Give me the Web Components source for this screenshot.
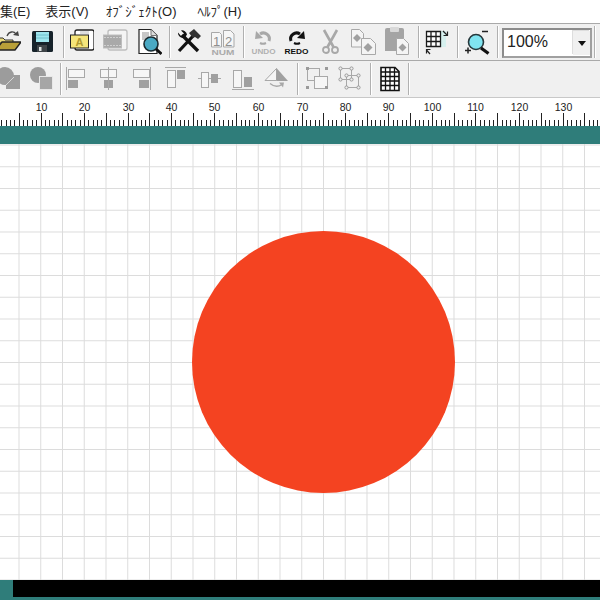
<!DOCTYPE html>
<html lang="ja">
<head>
<meta charset="utf-8">
<title>draw</title>
<style>
  html, body { margin: 0; padding: 0; background: #fff; overflow: hidden; }
  svg text { font-family: "Liberation Sans", sans-serif; }
</style>
</head>
<body>
<app-window>
  <menu-bar>
    <menu-item style="margin-left:0">集(E)</menu-item>
    <menu-item style="margin-left:15px">表示(V)</menu-item>
    <menu-item style="margin-left:17px">ｵﾌﾞｼﾞｪｸﾄ(O)</menu-item>
    <menu-item style="margin-left:21px">ﾍﾙﾌﾟ(H)</menu-item>
  </menu-bar>

  <tool-bar>
    <!-- open -->
    <tool-btn><svg width="21" height="36" viewBox="0 0 21 36">
      <path d="M-3 14h6l2 2h8v3H-3z" fill="#eadb7c" stroke="#333" stroke-width="1"/>
      <path d="M-4 26L2 18H21L15 26Z" fill="#b9a038" stroke="#222" stroke-width="1.400"/>
      <path d="M7 12C9 7 14 7 16 10" fill="none" stroke="#444" stroke-width="1.300"/>
      <path d="M13 11l6 1-1-5z" fill="#444"/>
    </svg></tool-btn>
    <!-- save -->
    <tool-btn style="margin-left:11px"><svg width="21" height="36" viewBox="0 0 21 36">
      <rect x="0" y="7" width="21" height="21" rx="1.500" fill="#16222a"/>
      <rect x="4" y="8" width="13" height="10" fill="#9fe5ee"/>
      <path d="M4 11h13M4 14h13" stroke="#6fc0cc" stroke-width="1"/>
      <rect x="5" y="21" width="10" height="7" fill="#3e4448"/>
      <rect x="7" y="23" width="2.500" height="4" fill="#dfe3e3"/>
    </svg></tool-btn>
    <tool-sep style="margin-left:10px"></tool-sep>
    <!-- frame with colour -->
    <tool-btn style="margin-left:6px"><svg width="24" height="36" viewBox="0 0 24 36">
      <path d="M5 11V8q0-2 2-2h15q2 0 2 2v16q0 2-2 2H7q-2 0-2-2v-1" fill="#fff" stroke="#222" stroke-width="1.300"/>
      <rect x="10" y="7" width="9" height="3" fill="#ddd"/>
      <rect x=".5" y="11" width="18" height="13" fill="#f5e57a" stroke="#222" stroke-width="1"/>
      <text x="9.500" y="22" font-size="11" font-weight="700" text-anchor="middle" fill="#b09a30">A</text>
    </svg></tool-btn>
    <!-- frame grey -->
    <tool-btn style="margin-left:9px"><svg width="25" height="36" viewBox="0 0 25 36">
      <path d="M5 11V8q0-2 2-2h15q2 0 2 2v16q0 2-2 2H7q-2 0-2-2v-1" fill="#f4f4f4" stroke="#bdbdbd" stroke-width="1.300"/>
      <rect x=".5" y="11" width="18" height="13" fill="#a9a9a9" stroke="#bdbdbd" stroke-width="1"/>
      <path d="M1 13.500h17M1 21.500h17" stroke="#cfcfcf" stroke-width="1" stroke-dasharray="2 1"/>
    </svg></tool-btn>
    <!-- page preview -->
    <tool-btn style="margin-left:10px"><svg width="24" height="36" viewBox="0 0 24 36">
      <path d="M1 5.500h12l6 6V29.500H1z" fill="#fff" stroke="#222" stroke-width="1.200"/>
      <path d="M13 5.500v6h6" fill="#ddd" stroke="#777"/>
      <path d="M4 8h7v8H4z" fill="#c8c8c8"/>
      <circle cx="13" cy="20" r="7" fill="#4aa9c4" stroke="#1a2a30" stroke-width="1.600"/>
      <path d="M18 25l5.500 5" stroke="#111" stroke-width="3"/>
    </svg></tool-btn>
    <tool-sep style="margin-left:7px"></tool-sep>
    <!-- tools -->
    <tool-btn style="margin-left:7px"><svg width="24" height="36" viewBox="0 0 24 36">
      <path d="M5 11L21 27" stroke="#111" stroke-width="3.400"/>
      <path d="M1 8.500a5 5 0 0 0 7 5l2-3a5 5 0 0 0-6-4l3 3-3 2.500z" fill="#111"/>
      <path d="M2 27L17 11" stroke="#111" stroke-width="3.200"/>
      <path d="M12 9l5-4 7 7-3 3-3-2-2 1z" fill="#333"/>
    </svg></tool-btn>
    <!-- number -->
    <tool-btn style="margin-left:10px"><svg width="24" height="36" viewBox="0 0 24 36">
      <path d="M.5 8.500h8l2 2V23H.5zM12.500 6.500h7l3.500 3.500V23H12.500z" fill="#f6f6f6" stroke="#a8a8a8"/>
      <text x="5.500" y="21.500" font-size="13" text-anchor="middle" fill="#8f8f8f">1</text>
      <text x="17.500" y="21.500" font-size="13" text-anchor="middle" fill="#8f8f8f">2</text>
      <text x="12" y="30.500" font-size="7.500" text-anchor="middle" fill="#aaa" font-weight="700" textLength="23" lengthAdjust="spacingAndGlyphs">NUM</text>
    </svg></tool-btn>
    <tool-sep style="margin-left:8px"></tool-sep>
    <!-- undo -->
    <tool-btn style="margin-left:7px"><svg width="25" height="36" viewBox="0 0 25 36">
      <path d="M18 17a6 6 0 0 0-9-7" fill="none" stroke="#a8a8a8" stroke-width="3"/>
      <path d="M12 14l-8 1 1-8z" fill="#a8a8a8"/>
      <path d="M9 19q3 1.500 6 0" fill="none" stroke="#a8a8a8" stroke-width="2"/>
      <text x="12.500" y="29.500" font-size="8" text-anchor="middle" fill="#b0b0b0" font-weight="700" textLength="24" lengthAdjust="spacingAndGlyphs">UNDO</text>
    </svg></tool-btn>
    <!-- redo -->
    <tool-btn style="margin-left:8px"><svg width="25" height="36" viewBox="0 0 25 36">
      <path d="M7 17a6 6 0 0 1 9-7" fill="none" stroke="#111" stroke-width="3"/>
      <path d="M13 14l8 1-1-8z" fill="#111"/>
      <path d="M10 19q3 1.500 6 0" fill="none" stroke="#111" stroke-width="2"/>
      <text x="12.500" y="29.500" font-size="8" text-anchor="middle" fill="#111" font-weight="700" textLength="24" lengthAdjust="spacingAndGlyphs">REDO</text>
    </svg></tool-btn>
    <!-- scissors -->
    <tool-btn style="margin-left:13px"><svg width="17" height="36" viewBox="0 0 17 36">
      <path d="M2 6l9.500 17M15 6L5.500 23" stroke="#a8a8a8" stroke-width="2.600"/>
      <circle cx="4" cy="26" r="3" fill="none" stroke="#a8a8a8" stroke-width="1.800"/>
      <circle cx="13" cy="26" r="3" fill="none" stroke="#a8a8a8" stroke-width="1.800"/>
    </svg></tool-btn>
    <!-- copy -->
    <tool-btn style="margin-left:12px"><svg width="25" height="36" viewBox="0 0 25 36">
      <path d="M.5 5.500h8l4 4V23H.5z" fill="#f4f4f4" stroke="#a8a8a8"/>
      <path d="M6 10l4 4-4 4-4-4z" fill="#a0a0a0"/>
      <path d="M10.500 14.500h9l5 5V30.500H10.500z" fill="#f4f4f4" stroke="#a8a8a8"/>
      <path d="M17 19l4.500 4.500L17 28l-4.500-4.500z" fill="#a0a0a0"/>
    </svg></tool-btn>
    <!-- paste -->
    <tool-btn style="margin-left:9px"><svg width="24" height="36" viewBox="0 0 24 36">
      <path d="M0 6q0-2 2-2h15q2 0 2 2v21H0z" fill="#a4a4a4"/>
      <rect x="5" y="3" width="9" height="5" rx="1" fill="#d8d8d8"/>
      <path d="M11.500 14.500h7l5 5V30.500H11.500z" fill="#f4f4f4" stroke="#a8a8a8"/>
      <path d="M17.500 19.500l4 4-4 4-4-4z" fill="#a0a0a0"/>
    </svg></tool-btn>
    <tool-sep style="margin-left:9px"></tool-sep>
    <!-- grid setup -->
    <tool-btn style="margin-left:6px"><svg width="24" height="36" viewBox="0 0 24 36">
      <rect x="15" y="7" width="6" height="16" fill="#d6f0ee"/>
      <path d="M1.500 7.500h14v15h-14zM1.500 12.500h14M1.500 17.500h14M6 7.500v15M11 7.500v15" fill="#fff" stroke="#1a1a1a" stroke-width="1.300"/>
      <path d="M18 7l4 4M22.500 7.500v4h-4" fill="none" stroke="#222" stroke-width="1.200"/>
      <path d="M5 30l-3.500-4M1.500 29.500v-4h4" fill="none" stroke="#222" stroke-width="1.200"/>
    </svg></tool-btn>
    <tool-sep style="margin-left:8px"></tool-sep>
    <!-- zoom -->
    <tool-btn style="margin-left:7px"><svg width="25" height="36" viewBox="0 0 25 36">
      <circle cx="11" cy="18" r="7.500" fill="#80e4f0" stroke="#26383c" stroke-width="1.600"/>
      <path d="M16 24l7.500 5.500" stroke="#111" stroke-width="3.200"/>
      <path d="M0 26.500h6M3 23.500v6M17 7.500h6" stroke="#222" stroke-width="1.500"/>
    </svg></tool-btn>
    <tool-sep style="margin-left:7px"></tool-sep>
    <zoom-combo style="margin-left:4px">100%</zoom-combo>
    <tool-sep style="margin-left:2px"></tool-sep>
  </tool-bar>

  <tool-bar>
    <!-- union -->
    <tool-btn><svg width="20" height="36" viewBox="0 0 20 36">
      <circle cx="5" cy="15" r="9" fill="#9c9c9c"/>
      <rect x="6" y="14" width="14" height="14" fill="#9c9c9c"/>
      <path d="M6 24l8-8" stroke="#d8d8d8" stroke-width="1"/>
    </svg></tool-btn>
    <!-- subtract -->
    <tool-btn style="margin-left:10px"><svg width="23" height="36" viewBox="0 0 23 36">
      <circle cx="8" cy="14" r="8" fill="#9c9c9c"/>
      <rect x="9.500" y="15.500" width="13" height="13" fill="#a6a6a6" stroke="#e8e8e8"/>
    </svg></tool-btn>
    <tool-sep style="margin-left:7px"></tool-sep>
    <!-- align left -->
    <tool-btn style="margin-left:5px"><svg width="20" height="36" viewBox="0 0 20 36">
      <path d="M.5 6v23" stroke="#a8a8a8"/>
      <rect x="2.500" y="8.500" width="16" height="8" fill="#f6f6f6" stroke="#a8a8a8"/>
      <rect x="2" y="19" width="10" height="8" fill="#a0a0a0"/>
    </svg></tool-btn>
    <!-- align centre -->
    <tool-btn style="margin-left:13px"><svg width="19" height="36" viewBox="0 0 19 36">
      <rect x="1.500" y="8.500" width="16" height="8" fill="#f6f6f6" stroke="#a8a8a8"/>
      <rect x="5" y="19" width="9" height="8" fill="#a0a0a0"/>
      <path d="M9.500 6v23" stroke="#a8a8a8"/>
    </svg></tool-btn>
    <!-- align right -->
    <tool-btn style="margin-left:14px"><svg width="19" height="36" viewBox="0 0 19 36">
      <path d="M18.500 6v23" stroke="#a8a8a8"/>
      <rect x="1.500" y="8.500" width="16" height="8" fill="#f6f6f6" stroke="#a8a8a8"/>
      <rect x="7" y="19" width="10" height="8" fill="#a0a0a0"/>
    </svg></tool-btn>
    <!-- align top -->
    <tool-btn style="margin-left:14px"><svg width="21" height="36" viewBox="0 0 21 36">
      <path d="M0 6.500h21" stroke="#a8a8a8"/>
      <rect x="2.500" y="9.500" width="8" height="17" fill="#f6f6f6" stroke="#a8a8a8"/>
      <rect x="12" y="9" width="8" height="9" fill="#a0a0a0"/>
    </svg></tool-btn>
    <!-- align middle -->
    <tool-btn style="margin-left:12px"><svg width="23" height="36" viewBox="0 0 23 36">
      <path d="M0 17.500h23" stroke="#a8a8a8"/>
      <rect x="3.500" y="11.500" width="7" height="15" fill="#f6f6f6" stroke="#a8a8a8"/>
      <rect x="13" y="13" width="7" height="9" fill="#a0a0a0"/>
    </svg></tool-btn>
    <!-- align bottom -->
    <tool-btn style="margin-left:11px"><svg width="22" height="36" viewBox="0 0 22 36">
      <path d="M0 28.500h22" stroke="#a8a8a8"/>
      <rect x="1.500" y="9.500" width="8" height="17" fill="#f6f6f6" stroke="#a8a8a8"/>
      <rect x="12" y="16" width="8" height="10" fill="#a0a0a0"/>
    </svg></tool-btn>
    <!-- flip -->
    <tool-btn style="margin-left:10px"><svg width="25" height="36" viewBox="0 0 25 36">
      <path d="M1 19.500L12.500 7.500V19.500z" fill="#f6f6f6" stroke="#a8a8a8"/>
      <path d="M12.500 7L24 20H12.500z" fill="#a0a0a0"/>
      <path d="M6 22.500q6 5 12 1" fill="none" stroke="#a8a8a8" stroke-width="1.300"/>
      <path d="M15 21.500l5 0-1 5z" fill="#a8a8a8"/>
    </svg></tool-btn>
    <tool-sep style="margin-left:8px"></tool-sep>
    <!-- group -->
    <tool-btn style="margin-left:7px"><svg width="24" height="36" viewBox="0 0 24 36">
      <rect x="2.500" y="7.500" width="12" height="12" fill="none" stroke="#a8a8a8"/>
      <rect x="9.500" y="15.500" width="13" height="12" fill="#f6f6f6" stroke="#a8a8a8"/>
      <path d="M1 6h3v3H1zM20 6h3v3h-3zM1 25h3v3H1zM20 25h3v3h-3z" fill="#9a9a9a"/>
    </svg></tool-btn>
    <!-- ungroup -->
    <tool-btn style="margin-left:8px"><svg width="24" height="36" viewBox="0 0 24 36">
      <rect x="3.500" y="7.500" width="11" height="11" fill="none" stroke="#a8a8a8"/>
      <rect x="9.500" y="14.500" width="12" height="12" fill="none" stroke="#a8a8a8"/>
      <g fill="#f0f0f0" stroke="#9a9a9a"><circle cx="3.500" cy="7.500" r="1.600"/><circle cx="14.500" cy="7.500" r="1.600"/><circle cx="3.500" cy="18.500" r="1.600"/><circle cx="14.500" cy="18.500" r="1.600"/><circle cx="9.500" cy="14.500" r="1.600"/><circle cx="21.500" cy="14.500" r="1.600"/><circle cx="9.500" cy="26.500" r="1.600"/><circle cx="21.500" cy="26.500" r="1.600"/></g>
    </svg></tool-btn>
    <tool-sep style="margin-left:9px"></tool-sep>
    <!-- table grid -->
    <tool-btn style="margin-left:9px"><svg width="20" height="36" viewBox="0 0 20 36">
      <path d="M1 6.500h14l4 4V29.500H1z" fill="#fff" stroke="#111" stroke-width="1.600"/>
      <path d="M5.500 7v22M10 7v22M14.500 7v22M1 11h18M1 15.500h18M1 20h18M1 24.500h18" stroke="#111" stroke-width="1.300"/>
    </svg></tool-btn>
    <tool-sep style="margin-left:8px"></tool-sep>
  </tool-bar>

  <ruler-bar></ruler-bar>
  <teal-band></teal-band>
  <draw-canvas><draw-circle></draw-circle></draw-canvas>
  <status-strip></status-strip>
</app-window>

<script>
function simple(name, css, html) {
  customElements.define(name, class extends HTMLElement {
    constructor() {
      super();
      this.attachShadow({ mode: "open" }).innerHTML = "<style>" + css + "</style>" + (html || "");
    }
  });
}

simple("app-window", `
  :host { display: flex; flex-direction: column; width: 600px; height: 600px; overflow: hidden; background: #fff; }
`, "<slot></slot>");

simple("menu-bar", `
  :host { display: flex; align-items: center; height: 23px; flex: none; background: #fff; padding-bottom: 3px; box-sizing: border-box;
    font: 13px "Liberation Sans", "Noto Sans CJK JP", sans-serif; color: #222; white-space: nowrap; }
`, "<slot></slot>");

simple("menu-item", `:host { display: block; }`, "<slot></slot>");

simple("tool-bar", `
  :host { display: flex; align-items: stretch; height: 37px; flex: none; box-sizing: border-box;
    background: #f0f0f0; border-top: 1px solid #a9a9a9; }
`, "<slot></slot>");

simple("tool-btn", `
  :host { display: flex; flex: none; }
  ::slotted(svg) { display: block; overflow: hidden; }
`, "<slot></slot>");

simple("tool-sep", `
  :host { display: block; flex: none; width: 1px; background: #b0b0b0; margin-top: 2px; margin-bottom: 2px; box-shadow: 1px 0 0 #fff; }
`);

simple("zoom-combo", `
  :host { display: flex; flex: none; box-sizing: border-box; width: 90px; height: 30px; margin-top: 4px;
    background: #fff; border: 2px solid #8c8c8c; border-right-color: #a0a0a0; border-bottom-color: #a0a0a0;
    font: 16px "Liberation Sans", sans-serif; color: #222; }
  .val { flex: 1; padding: 3px 0 0 3px; }
  .btn { width: 17px; margin: 1px 0 1px; background: #f0f0f0; display: flex; align-items: center; justify-content: center; box-shadow: -1px -1px 0 #ddd; }
  .btn i { width: 0; height: 0; border: 4.5px solid transparent; border-top: 5px solid #111; border-bottom: 0; }
`, '<div class="val"><slot></slot></div><div class="btn"><i></i></div>');

// ruler: one tick per unit, long one each 5 units, label each 10
const UNIT = 4.35, ORIGIN = -3;
class RulerBar extends HTMLElement {
  constructor() {
    super();
    this.attachShadow({ mode: "open" });
    let ticks = "", labels = "";
    for (let i = 0; i <= 140; i++) {
      const x = Math.round(ORIGIN + i * UNIT) + 0.5;
      const top = i % 5 === 0 ? 15 : 22;
      ticks += `M${x} ${top}V28`;
      if (i % 10 === 0 && i > 0 && i < 140) {
        labels += `<text x="${x}" y="13" text-anchor="middle">${i}</text>`;
      }
    }
    this.shadowRoot.innerHTML = `
      <style>
        :host { display: block; flex: none; height: 28px; background: #fff; border-top: 1px solid #c8c8c8; box-sizing: content-box; }
        svg { display: block; }
        text { font: 10.5px "Liberation Sans", sans-serif; fill: #222; }
      </style>
      <svg width="600" height="28" viewBox="0 0 600 28">
        <path d="${ticks}" stroke="#222" stroke-width="1" fill="none"/>${labels}
      </svg>`;
  }
}
customElements.define("ruler-bar", RulerBar);

simple("teal-band", `:host { display: block; flex: none; height: 18px; background: #2f7d7a; }`);

simple("draw-canvas", `
  :host { display: block; position: relative; flex: 1; background-color: #fff;
    background-image:
      linear-gradient(to right, #dcdcdc 1px, transparent 1px),
      linear-gradient(to bottom, #dcdcdc 1px, transparent 1px);
    background-size: 21.75px 21.75px;
    background-position: 18.5px 0.5px; }
`, "<slot></slot>");

simple("draw-circle", `
  :host { position: absolute; left: 192px; top: 87px; width: 263px; height: 262px; border-radius: 50%; background: #f44321; }
`);

simple("status-strip", `
  :host { display: block; flex: none; height: 20px; background: #2f7d7a; padding: 0 0 3px 13px; box-sizing: border-box; }
  div { height: 17px; background: #000; }
`, "<div></div>");
</script>
</body>
</html>
